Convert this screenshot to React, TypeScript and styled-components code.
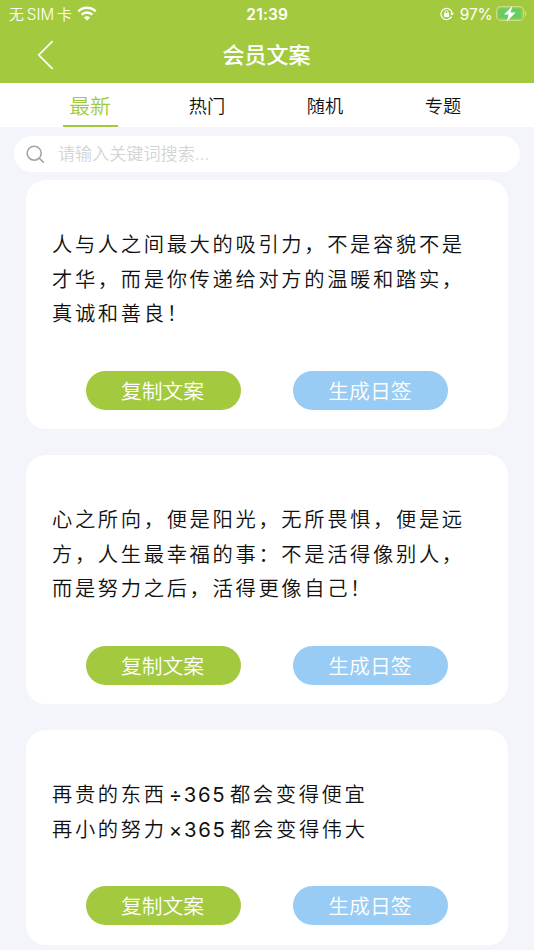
import React from "react";
import styled, { createGlobalStyle } from "styled-components";

const GlobalStyle = createGlobalStyle`
  * { box-sizing: border-box; }
  body {
    margin: 0;
    height: 950px;
    overflow: hidden;
    background: #f4f5fa;
    font-family: Inter, "Noto Sans CJK SC", sans-serif;
    font-weight: 350;
    color: #111;
  }
`;

const Screen = styled.main`
  width: 534px;
  height: 950px;
  overflow: hidden;
`;

const Header = styled.header`
  height: 83px;
  background: #a3ca3f;
  color: #fff;
`;

const StatusBar = styled.div`
  display: grid;
  grid-template-columns: 1fr auto 1fr;
  align-items: center;
  height: 28px;
  padding: 0 7.5px 0 9px;
`;

const StatusGroup = styled.div<{ $end?: boolean }>`
  display: flex;
  align-items: center;
  justify-content: ${(p) => (p.$end ? "flex-end" : "flex-start")};
  font-size: 15.5px;
  line-height: 28px;
  white-space: pre;
  svg { display: block; flex: none; margin-bottom: 1.5px; }
`;

const Carrier = styled.span`
  display: flex;
  gap: 3px;
  margin-right: 5px;
  font-size: 14.8px;
`;

const CarrierName = styled.span`
  font-size: 15.2px;
`;

const Percent = styled.span`
  margin: 1px 3px 0 6px;
  font-size: 15.5px;
  font-weight: 400;
  letter-spacing: -0.2px;
`;

const Clock = styled.time`
  margin-right: 1px;
  font-size: 15.5px;
  font-weight: 600;
  letter-spacing: 0.2px;
`;

const TitleBar = styled.div`
  display: grid;
  grid-template-columns: 60px 1fr 60px;
  align-items: center;
  height: 54px;
`;

const BackButton = styled.button`
  display: flex;
  padding: 0 0 0 37px;
  border: 0;
  background: none;
  color: inherit;
`;

const Title = styled.h1`
  margin: 0 1px 0 0;
  text-align: center;
  font-size: 22px;
  font-weight: 500;
  line-height: 54px;
`;

const Tabs = styled.nav`
  display: flex;
  justify-content: center;
  height: 44px;
  background: #fff;
`;

const TabSlot = styled.div`
  display: flex;
  justify-content: center;
  width: 118px;
`;

const Tab = styled.button<{ $active?: boolean }>`
  width: 55px;
  padding: ${(p) => (p.$active ? "4px 0 0" : "5px 2px 0 0")};
  border: 0;
  border-bottom: 2px solid ${(p) => (p.$active ? "#a3ca3f" : "transparent")};
  background: none;
  color: ${(p) => (p.$active ? "#a3ca3f" : "#111")};
  font-family: inherit;
  font-size: ${(p) => (p.$active ? 20.8 : 18.2)}px;
  font-weight: 350;
  line-height: 37px;
  white-space: nowrap;
`;

const SearchBar = styled.label`
  display: flex;
  align-items: center;
  height: 36px;
  margin: 9px 14.5px 7.6px 14px;
  padding-left: 12px;
  border-radius: 18px;
  background: #fff;
`;

const SearchInput = styled.input`
  flex: 1;
  margin-left: 13px;
  padding: 0;
  border: 0;
  outline: 0;
  background: none;
  font-family: inherit;
  font-size: 17.1px;
  font-weight: 350;
  line-height: 26px;
  &::placeholder { color: #d4d4d4; opacity: 1; }
`;

const Feed = styled.section`
  display: flex;
  flex-direction: column;
  gap: 25.8px;
  padding: 0 26px;
`;

const Card = styled.article`
  padding: 48.3px 26px 19.3px;
  border-radius: 20px;
  background: #fff;
`;

const Quote = styled.div`
  margin-bottom: 38.7px;
  font-size: 20.3px;
  line-height: 34.7px;
  letter-spacing: 2.65px;
  white-space: pre;
`;

const QuoteLine = styled.div`
  display: flex;
  height: 34.7px;
`;

const Figure = styled.span`
  margin: 0 3.4px 0 2px;
  font-weight: 400;
  letter-spacing: 1.8px;
`;

const Actions = styled.div`
  display: flex;
  gap: 52.4px;
  padding-left: 34px;
`;

const Pill = styled.button<{ $tone: "green" | "blue" }>`
  width: 155px;
  height: 39px;
  padding: 2px 2px 0 0;
  border: 0;
  border-radius: 20px;
  background: ${(p) => (p.$tone === "green" ? "#a3ca3f" : "#98ccf5")};
  color: #fff;
  font-family: inherit;
  font-size: 20.8px;
  font-weight: 350;
  line-height: 37px;
`;

const quotes = [
  "人与人之间最大的吸引力，不是容貌不是\n才华，而是你传递给对方的温暖和踏实，\n真诚和善良！",
  "心之所向，便是阳光，无所畏惧，便是远\n方，人生最幸福的事：不是活得像别人，\n而是努力之后，活得更像自己！",
  "再贵的东西÷365都会变得便宜\n再小的努力×365都会变得伟大",
];

const tabs = ["最新", "热门", "随机", "专题"];

const WifiIcon = () => (
  <svg width="20" height="15" viewBox="0 0 20 15" fill="none" stroke="#fff" strokeWidth="2.5">
    <path d="M1.3 5.3C6.2.6 13.8.6 18.7 5.3" />
    <path d="M4.6 8.7c3-2.9 7.8-2.9 10.8 0" />
    <path d="M10 14.6 6.9 11.5c1.8-1.6 4.4-1.6 6.2 0Z" fill="#fff" stroke="none" />
  </svg>
);

const RotationLockIcon = () => (
  <svg width="14" height="14" viewBox="0 0 14 14" fill="none" stroke="#fff" strokeWidth="1.2">
    <path d="M11.5 9.6A5.6 5.6 0 1 1 12.1 6" />
    <path d="M10.2 6h3.6L12 8.7Z" fill="#fff" stroke="none" />
    <rect x="4.1" y="6.1" width="4.9" height="3.9" rx=".6" fill="#fff" stroke="none" />
    <path d="M5.1 6.5V5.2a1.45 1.45 0 0 1 2.9 0v1.3" strokeWidth="1" />
  </svg>
);

const BatteryIcon = () => (
  <svg width="31" height="17" viewBox="0 0 31 17" fill="none">
    <rect x=".6" y="1.6" width="27" height="13.8" rx="4" stroke="#fff" strokeOpacity=".4" strokeWidth="1.1" />
    <rect x="2.5" y="3.4" width="22.5" height="10.2" rx="2.2" fill="#65cd66" />
    <path d="M29.2 6.2c1.6.5 1.6 4.1 0 4.6Z" fill="#fff" fillOpacity=".5" />
    <path d="M16.4 1 8 9.4h4.7l-2 7 9-8.8h-5.1Z" fill="#fff" />
  </svg>
);

const BackIcon = () => (
  <svg width="17" height="30" viewBox="0 0 17 30" fill="none" stroke="#fff" strokeWidth="1.7">
    <path d="M15.6 1.2 1.8 15l13.8 13.8" />
  </svg>
);

const SearchIcon = () => (
  <svg width="19" height="19" viewBox="0 0 19 19" fill="none" stroke="#a3a3a3" strokeWidth="1.6" strokeLinecap="round">
    <circle cx="8.2" cy="8.2" r="7" />
    <path d="m13.3 13.3 4 4" />
  </svg>
);

export default function App() {
  return (
    <Screen>
      <GlobalStyle />
      <Header>
        <StatusBar>
          <StatusGroup>
            <Carrier>
              <span>无</span>
              <CarrierName>SIM</CarrierName>
              <span>卡</span>
            </Carrier>
            <WifiIcon />
          </StatusGroup>
          <Clock>21:39</Clock>
          <StatusGroup $end>
            <RotationLockIcon />
            <Percent>97%</Percent>
            <BatteryIcon />
          </StatusGroup>
        </StatusBar>
        <TitleBar>
          <BackButton aria-label="返回">
            <BackIcon />
          </BackButton>
          <Title>会员文案</Title>
        </TitleBar>
      </Header>
      <Tabs>
        {tabs.map((name, i) => (
          <TabSlot key={name}>
            <Tab $active={i === 0}>{name}</Tab>
          </TabSlot>
        ))}
      </Tabs>
      <SearchBar>
        <SearchIcon />
        <SearchInput placeholder="请输入关键词搜索..." />
      </SearchBar>
      <Feed>
        {quotes.map((text) => (
          <Card key={text}>
            <Quote>
              {text.split("\n").map((line) => (
                <QuoteLine key={line}>
                  {line.split(/([÷×]\d+)/).map((part, i) =>
                    i % 2 ? <Figure key={i}>{part}</Figure> : <span key={i}>{part}</span>
                  )}
                </QuoteLine>
              ))}
            </Quote>
            <Actions>
              <Pill $tone="green">复制文案</Pill>
              <Pill $tone="blue">生成日签</Pill>
            </Actions>
          </Card>
        ))}
      </Feed>
    </Screen>
  );
}
